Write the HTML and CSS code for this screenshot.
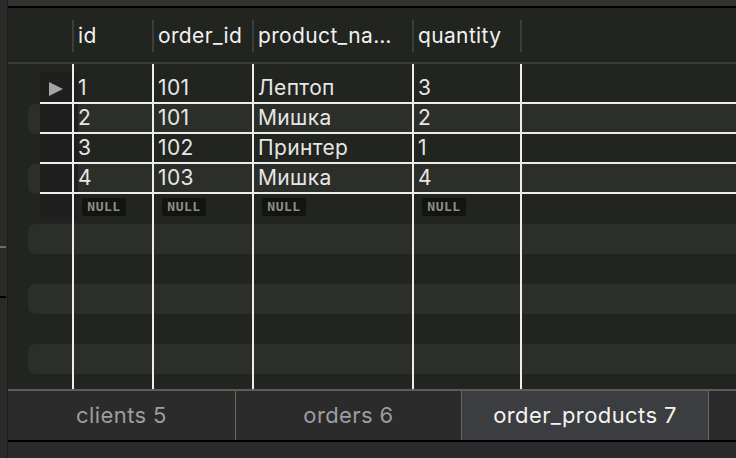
FILE: index.html
```html
<!DOCTYPE html>
<html lang="ru">
<head>
<meta charset="utf-8">
<title>order_products</title>
<link rel="stylesheet" href="styles.css">
</head>
<body>
<div class="app">
  <div class="strip">
    <div class="mark mark-light"></div>
    <div class="mark mark-dark"></div>
  </div>
  <div class="main">
    <div class="topbar"></div>
    <div class="topline"></div>
    <div class="header">
      <div class="h-lead"></div>
      <div class="hcell w-id">id</div>
      <div class="hcell w-oid">order_id</div>
      <div class="hcell w-pn">product_na…</div>
      <div class="hcell w-q">quantity</div>
      <div class="hcell w-rest"></div>
    </div>
    <div class="grid">
      <div class="row spacer"><div class="line"><div class="ind"></div><div class="cell w-id"></div><div class="cell w-oid"></div><div class="cell w-pn"></div><div class="cell w-q"></div><div class="cell w-rest"></div></div></div>
      <div class="row first"><div class="line ruled"><div class="ind dark"><svg class="tri" width="14" height="14" viewBox="0 0 14 14"><polygon points="0,0 14,7 0,14" fill="#a4a4a4"/></svg></div><div class="cell w-id ext">1</div><div class="cell w-oid">101</div><div class="cell w-pn">Лептоп</div><div class="cell w-q">3</div><div class="cell w-rest"></div></div></div>
      <div class="row alt"><div class="line ruled"><div class="ind dark"></div><div class="cell w-id ext">2</div><div class="cell w-oid">101</div><div class="cell w-pn">Мишка</div><div class="cell w-q">2</div><div class="cell w-rest"></div></div></div>
      <div class="row"><div class="line ruled"><div class="ind dark"></div><div class="cell w-id ext">3</div><div class="cell w-oid">102</div><div class="cell w-pn">Принтер</div><div class="cell w-q">1</div><div class="cell w-rest"></div></div></div>
      <div class="row alt"><div class="line ruled"><div class="ind dark"></div><div class="cell w-id ext">4</div><div class="cell w-oid">103</div><div class="cell w-pn">Мишка</div><div class="cell w-q">4</div><div class="cell w-rest"></div></div></div>
      <div class="row"><div class="line"><div class="ind dark short"></div><div class="cell w-id ext short"><span class="null">NULL</span></div><div class="cell w-oid"><span class="null">NULL</span></div><div class="cell w-pn"><span class="null">NULL</span></div><div class="cell w-q"><span class="null">NULL</span></div><div class="cell w-rest"></div></div></div>
      <div class="row alt"><div class="line"><div class="ind"></div><div class="cell w-id"></div><div class="cell w-oid"></div><div class="cell w-pn"></div><div class="cell w-q"></div><div class="cell w-rest"></div></div></div>
      <div class="row"><div class="line"><div class="ind"></div><div class="cell w-id"></div><div class="cell w-oid"></div><div class="cell w-pn"></div><div class="cell w-q"></div><div class="cell w-rest"></div></div></div>
      <div class="row alt"><div class="line"><div class="ind"></div><div class="cell w-id"></div><div class="cell w-oid"></div><div class="cell w-pn"></div><div class="cell w-q"></div><div class="cell w-rest"></div></div></div>
      <div class="row"><div class="line"><div class="ind"></div><div class="cell w-id"></div><div class="cell w-oid"></div><div class="cell w-pn"></div><div class="cell w-q"></div><div class="cell w-rest"></div></div></div>
      <div class="row alt"><div class="line"><div class="ind"></div><div class="cell w-id"></div><div class="cell w-oid"></div><div class="cell w-pn"></div><div class="cell w-q"></div><div class="cell w-rest"></div></div></div>
      <div class="row"><div class="line"><div class="ind"></div><div class="cell w-id"></div><div class="cell w-oid"></div><div class="cell w-pn"></div><div class="cell w-q"></div><div class="cell w-rest"></div></div></div>
    </div>
    <div class="tabs">
      <div class="tab tab-1">clients 5</div>
      <div class="tab tab-2">orders 6</div>
      <div class="tab tab-3 active">order_products 7</div>
      <div class="tab tab-4"></div>
    </div>
    <div class="bottom"></div>
  </div>
</div>
</body>
</html>
```

FILE: styles.css
```css
* { box-sizing: border-box; }
html, body { margin: 0; padding: 0; }
body {
  width: 736px;
  height: 458px;
  overflow: hidden;
  background: #2b2b2b;
  font-family: "Inter", "Liberation Sans", sans-serif;
  font-size: 21px;
  letter-spacing: 0.35px;
  color: #e8e8e8;
}
.app { display: flex; height: 458px; }
.strip {
  width: 8px;
  flex: none;
  background: #2a2a2a;
  border-right: 1px solid #1c1c1c;
  display: flex;
  flex-direction: column;
  padding-top: 246px;
}
.mark { height: 2px; width: 6px; }
.mark-light { background: #6b6b6b; }
.mark-dark { background: #000; margin-top: 48px; }
.main { flex: 1; display: flex; flex-direction: column; min-width: 0; }
.topbar { height: 6px; background: #323232; }
.topline { height: 2px; background: #000; }
.header {
  height: 56px;
  background: #21241f;
  border-bottom: 2px solid #3a3d38;
  display: flex;
  padding-top: 12px;
}
.h-lead { width: 64px; flex: none; }
.hcell {
  height: 32px;
  line-height: 31px;
  border-left: 2px solid #3b3e39;
  padding-left: 4px;
  color: #f2f2f2;
  white-space: nowrap;
  overflow: hidden;
  flex: none;
}
.w-id { width: 80px; }
.w-oid { width: 100px; }
.w-pn { width: 160px; }
.w-q { width: 108px; }
.w-rest { flex: 1 1 auto; }
.grid {
  height: 325px;
  overflow: hidden;
  background: #21241f;
}
.row {
  height: 30px;
  margin-left: 20px;
  display: flex;
  border-radius: 7px 0 0 7px;
}
.row.spacer { height: 8px; }
.row.first { height: 32px; }
.row.alt { background: #2c2e29; }
.line {
  margin-left: 12px;
  flex: 1;
  display: flex;
}
.line.ruled { border-bottom: 2px solid #ececec; }
.ind { width: 32px; flex: none; }
.ind.dark { background: #1f1f1f; }
.ind.dark.short { background: linear-gradient(#1f1f1f, #1f1f1f) no-repeat; background-size: 100% 26px; }
.tri { display: block; margin: 10px 0 0 9px; }
.cell {
  flex: none;
  border-left: 2px solid #ededed;
  padding-left: 4px;
  line-height: 27px;
  white-space: nowrap;
  color: #e6e6e6;
}
.line.ruled .cell { margin-bottom: -2px; }
.cell.w-rest { flex: 1 1 auto; }
.row.first .cell { padding-top: 2px; }
.cell.ext { background: linear-gradient(#1f1f1f, #1f1f1f) no-repeat; background-size: 4px 28px; }
.cell.ext.short { background-size: 4px 26px; }
.null {
  display: inline-block;
  margin: 4px 0 0 4px;
  width: 44px;
  height: 18px;
  line-height: 18px;
  background: #121411;
  border-radius: 2px;
  color: #8e8e8e;
  font-family: "DejaVu Sans Mono", monospace;
  font-weight: bold;
  font-size: 13px;
  letter-spacing: 0.5px;
  text-align: center;
  vertical-align: top;
}
.tabs {
  height: 51px;
  border-top: 2px solid #5c5c58;
  background: #2b2b2b;
  display: flex;
}
.tab {
  flex: none;
  height: 49px;
  line-height: 49px;
  text-align: center;
  font-size: 22px;
  letter-spacing: 0.4px;
  color: #9c9ea1;
  border-right: 1px solid #666662;
  white-space: nowrap;
}
.tab-1 { width: 228px; }
.tab-2 { width: 226px; }
.tab-3 { width: 247px; }
.tab-4 { flex: 1; border-right: none; background: #2a2a2a; }
.tab.active { background: #3c3d40; color: #f3f3f3; }
.bottom { height: 18px; border-top: 2px solid #000; background: #2b2b2b; }
```
